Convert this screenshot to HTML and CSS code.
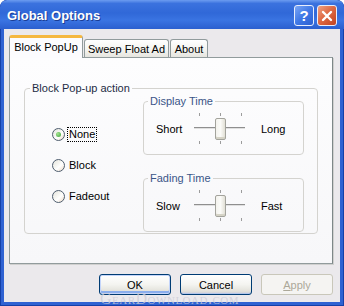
FILE: index.html
```html
<!DOCTYPE html>
<html lang="en">
<head>
    <meta charset="UTF-8">
    <title>Global Options</title>
    <link rel="stylesheet" href="styles.css">
</head>
<body>
    <div class="window">
        <div class="titlebar">
            <span class="title">Global Options</span>
            <div class="caption-buttons">
                <span class="cap-btn help">?</span>
                <span class="cap-btn close">
                    <svg width="12" height="12" viewBox="0 0 12 12">
                        <path d="M2 2 L10 10 M10 2 L2 10" stroke="#fff" stroke-width="2.4" stroke-linecap="round"/>
                    </svg>
                </span>
            </div>
        </div>

        <div class="client">
            <div class="tabs">
                <div class="tab active">Block PopUp</div>
                <div class="tab sweep">Sweep Float Ad</div>
                <div class="tab about">About</div>
            </div>

            <div class="panel">
                <fieldset class="group action">
                    <legend>Block Pop-up action</legend>
                    <div class="action-body">
                        <div class="radios">
                            <div class="radio-row">
                                <span class="radio checked"></span>
                                <span class="radio-label focused">None</span>
                            </div>
                            <div class="radio-row">
                                <span class="radio"></span>
                                <span class="radio-label">Block</span>
                            </div>
                            <div class="radio-row">
                                <span class="radio"></span>
                                <span class="radio-label">Fadeout</span>
                            </div>
                        </div>

                        <div class="timers">
                            <fieldset class="group timer">
                                <legend>Display Time</legend>
                                <div class="slider-row">
                                    <span class="slider-label">Short</span>
                                    <div class="slider">
                                        <div class="ticks top"><i></i><i></i><i></i></div>
                                        <div class="track"></div>
                                        <div class="thumb"></div>
                                        <div class="ticks bottom"><i></i><i></i><i></i></div>
                                    </div>
                                    <span class="slider-end">Long</span>
                                </div>
                            </fieldset>
                            <fieldset class="group timer">
                                <legend>Fading Time</legend>
                                <div class="slider-row">
                                    <span class="slider-label">Slow</span>
                                    <div class="slider">
                                        <div class="ticks top"><i></i><i></i><i></i></div>
                                        <div class="track"></div>
                                        <div class="thumb"></div>
                                        <div class="ticks bottom"><i></i><i></i><i></i></div>
                                    </div>
                                    <span class="slider-end">Fast</span>
                                </div>
                            </fieldset>
                        </div>
                    </div>
                </fieldset>
            </div>

            <div class="buttons">
                <button class="btn default">OK</button>
                <button class="btn">Cancel</button>
                <button class="btn" disabled><u>A</u>pply</button>
            </div>
        </div>

        <div class="watermark">GearDownload.com</div>
    </div>
</body>
</html>
```

FILE: styles.css
```css
body {
    margin: 0;
    padding: 0;
    font-family: "Liberation Sans", Arial, sans-serif;
    font-size: 11px;
    color: #000;
    background: #fff;
}

.window {
    position: relative;
    width: 344px;
    height: 306px;
    box-sizing: border-box;
    display: flex;
    flex-direction: column;
    background: #2f62d2;
    border-radius: 7px 7px 0 0;
    padding: 0 4px 4px 4px;
    box-shadow: inset 0 0 0 1px #1540a8;
    overflow: hidden;
}

/* title bar */
.titlebar {
    height: 29px;
    margin: 0 -4px;
    padding: 0 7px;
    display: flex;
    align-items: center;
    justify-content: space-between;
    border-radius: 7px 7px 0 0;
    background: linear-gradient(#6c9cf0 0%, #3b72de 12%, #3068d8 45%, #3a74e2 70%, #2b5fcf 100%);
}

.title {
    color: #fff;
    font-weight: bold;
    font-size: 13px;
    text-shadow: 1px 1px 0 #1a3d94;
    padding-top: 1px;
}

.caption-buttons {
    display: flex;
    gap: 3px;
    padding-top: 2px;
}

.cap-btn {
    width: 20px;
    height: 21px;
    box-sizing: border-box;
    border: 1px solid #e8eefc;
    border-radius: 3px;
    display: flex;
    align-items: center;
    justify-content: center;
}

.help {
    color: #fff;
    font-weight: bold;
    font-size: 15px;
    background: linear-gradient(135deg, #7ba6f5 0%, #3f78e6 50%, #2d60d0 100%);
}

.close {
    background: linear-gradient(135deg, #f0a283 0%, #de6a45 45%, #c2421f 100%);
}

/* client area */
.client {
    flex: 1;
    display: flex;
    flex-direction: column;
    background: #ebe9ec;
}

.tabs {
    display: flex;
    align-items: flex-end;
    height: 22px;
    margin-top: 6px;
    padding-left: 5px;
}

.tab {
    height: 18px;
    box-sizing: border-box;
    border: 1px solid #919b9c;
    border-bottom: none;
    border-radius: 3px 3px 0 0;
    background: linear-gradient(#ffffff, #f3f3ef 60%, #e6e5df);
    display: flex;
    align-items: center;
    justify-content: center;
    margin-left: 1px;
}

.tab.active {
    height: 23px;
    width: 74px;
    margin-left: 0;
    margin-bottom: -1px;
    position: relative;
    z-index: 1;
    border-top: 3px solid #f5b840;
    background: #fcfcfe;
    padding-bottom: 2px;
}

.tab.sweep {
    width: 85px;
}

.tab.about {
    width: 38px;
}

.panel {
    height: 207px;
    box-sizing: border-box;
    margin: 0 7px 0 5px;
    border: 1px solid #919b9c;
    border-right-color: #7d8788;
    background: linear-gradient(#fdfdfe, #f7f7f9);
    box-shadow: 1px 1px 0 #d0d0cf;
    padding: 24px 14px 0 14px;
}

/* group boxes */
.group {
    margin: 0;
    padding: 0;
    border: 1px solid #d4d3cf;
    border-radius: 4px;
    min-width: 0;
}

.group legend {
    padding: 0 2px;
    line-height: 13px;
}

.action legend {
    margin-left: 5px;
    color: #1d2c44;
}

.action-body {
    display: flex;
    padding-bottom: 1px;
}

.radios {
    width: 118px;
    padding: 32px 0 0 27px;
    box-sizing: border-box;
    display: flex;
    flex-direction: column;
    gap: 16px;
}

.radio-row {
    display: flex;
    align-items: center;
    height: 15px;
}

.radio {
    width: 13px;
    height: 13px;
    box-sizing: border-box;
    border: 1px solid #4e5d6e;
    border-radius: 50%;
    background: linear-gradient(135deg, #e4e3dc 0%, #f8f8f4 45%, #ffffff 60%, #ecd9c4 100%);
    display: flex;
    align-items: center;
    justify-content: center;
}

.radio.checked::after {
    content: "";
    width: 5px;
    height: 5px;
    border-radius: 50%;
    background: radial-gradient(circle at 35% 35%, #a6e38f, #3aa33a);
}

.radio-label {
    margin-left: 2px;
    padding: 0 1px;
    border: 1px dotted transparent;
    line-height: 13px;
}

.radio-label.focused {
    border-color: #000;
}

.timers {
    width: 161px;
    display: flex;
    flex-direction: column;
}

.timer {
    padding: 5px 0 10px 0;
}

.timer legend {
    margin-left: 4px;
    color: #3a5588;
}

.timer + .timer {
    margin-top: 17px;
}

/* sliders */
.slider-row {
    display: flex;
    align-items: center;
    padding-left: 12px;
}

.slider-label {
    width: 36px;
}

.slider-end {
    margin-left: 13px;
}

.slider {
    position: relative;
    width: 56px;
    height: 31px;
}

.ticks {
    position: absolute;
    left: 7px;
    width: 43px;
    height: 3px;
    display: flex;
    justify-content: space-between;
}

.ticks.top {
    top: 0;
}

.ticks.bottom {
    bottom: 0;
}

.ticks i {
    width: 1px;
    height: 3px;
    background: #9c9c9c;
}

.track {
    position: absolute;
    left: 2px;
    right: 3px;
    top: 14px;
    height: 1px;
    background: #8f8f8f;
    border-bottom: 1px solid #e0e0e0;
}

.thumb {
    position: absolute;
    left: 23px;
    top: 5px;
    width: 11px;
    height: 22px;
    box-sizing: border-box;
    border: 1px solid #a3a39c;
    border-radius: 2px;
    background: linear-gradient(90deg, #f4f3ee, #fbfbf8 50%, #e2e0d6);
    box-shadow: inset 0 -2px 0 #d5d3c6;
}

/* dialog buttons */
.buttons {
    display: flex;
    justify-content: flex-end;
    gap: 9px;
    margin-top: 10px;
    padding-right: 7px;
}

.btn {
    width: 72px;
    height: 21px;
    padding: 0;
    font-family: "Liberation Sans", Arial, sans-serif;
    font-size: 11px;
    color: #000;
    border: 1px solid #003c74;
    border-radius: 3px;
    background: linear-gradient(#ffffff, #f4f4f0 50%, #e3e2db 85%, #c9cbd9);
    box-shadow: inset 0 -1px 0 #b4c6ea;
}

.btn.default {
    box-shadow: inset 0 0 0 1px #c4d5fa, inset 0 -2px 0 1px #8aaeed;
}

.btn:disabled {
    color: #aca899;
    border-color: #c9c7ba;
    background: #f5f4f2;
    box-shadow: none;
}

.watermark {
    position: absolute;
    left: 100px;
    top: 292px;
    font-family: "Liberation Serif", serif;
    font-variant: small-caps;
    font-size: 16px;
    line-height: 14px;
    letter-spacing: 0.5px;
    color: rgba(205, 205, 215, 0.8);
}
```
